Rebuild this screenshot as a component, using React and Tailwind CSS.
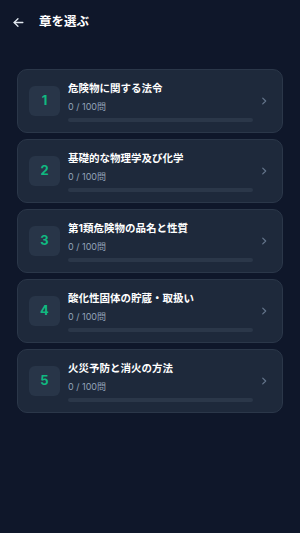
const chapters = [
  { no: 1, title: "危険物に関する法令" },
  { no: 2, title: "基礎的な物理学及び化学" },
  { no: 3, title: "第1類危険物の品名と性質" },
  { no: 4, title: "酸化性固体の貯蔵・取扱い" },
  { no: 5, title: "火災予防と消火の方法" },
];

const font = { fontFamily: 'Inter, "Noto Sans CJK JP", sans-serif' };

export default function App() {
  return (
    <div className="min-h-[533px] w-full bg-[#0f172a] text-white" style={font}>
      {/* ヘッダー */}
      <div className="flex h-[44px] items-center gap-[14px] px-[12px]">
        <svg width="13" height="13" viewBox="0 0 24 24" fill="none" stroke="#e2e8f0" strokeWidth="2.4" strokeLinecap="round" strokeLinejoin="round">
          <path d="M20 12H4" />
          <path d="M11 19l-7-7 7-7" />
        </svg>
        <h1 className="text-[12.5px] font-bold leading-none">章を選ぶ</h1>
      </div>

      {/* 章リスト */}
      <div className="flex flex-col gap-[6px] px-[17px] pt-[25px]">
        {chapters.map((c) => (
          <div
            key={c.no}
            className="flex h-[64px] items-center rounded-[10px] border border-[#2b3749] bg-[#1e293b] pl-[11px] pr-[13px]"
          >
            <div className="flex h-[30px] w-[31px] shrink-0 items-center justify-center rounded-[6px] bg-[#283548] text-[13px] font-bold text-[#10b981]">
              {c.no}
            </div>
            <div className="ml-[8px] flex-1 pt-[4px]">
              <div className="text-[10.5px] font-bold leading-none text-white">{c.title}</div>
              <div className="mt-[7.5px] text-[9px] leading-none text-[#94a3b8]">0 / 100問</div>
              <div className="mt-[7px] h-[4px] w-[185px] rounded-full bg-[#2b3749]" />
            </div>
            <svg width="10" height="10" viewBox="0 0 24 24" fill="none" stroke="#64748b" strokeWidth="3" strokeLinecap="round" strokeLinejoin="round">
              <path d="M9 5l7 7-7 7" />
            </svg>
          </div>
        ))}
      </div>
    </div>
  );
}
